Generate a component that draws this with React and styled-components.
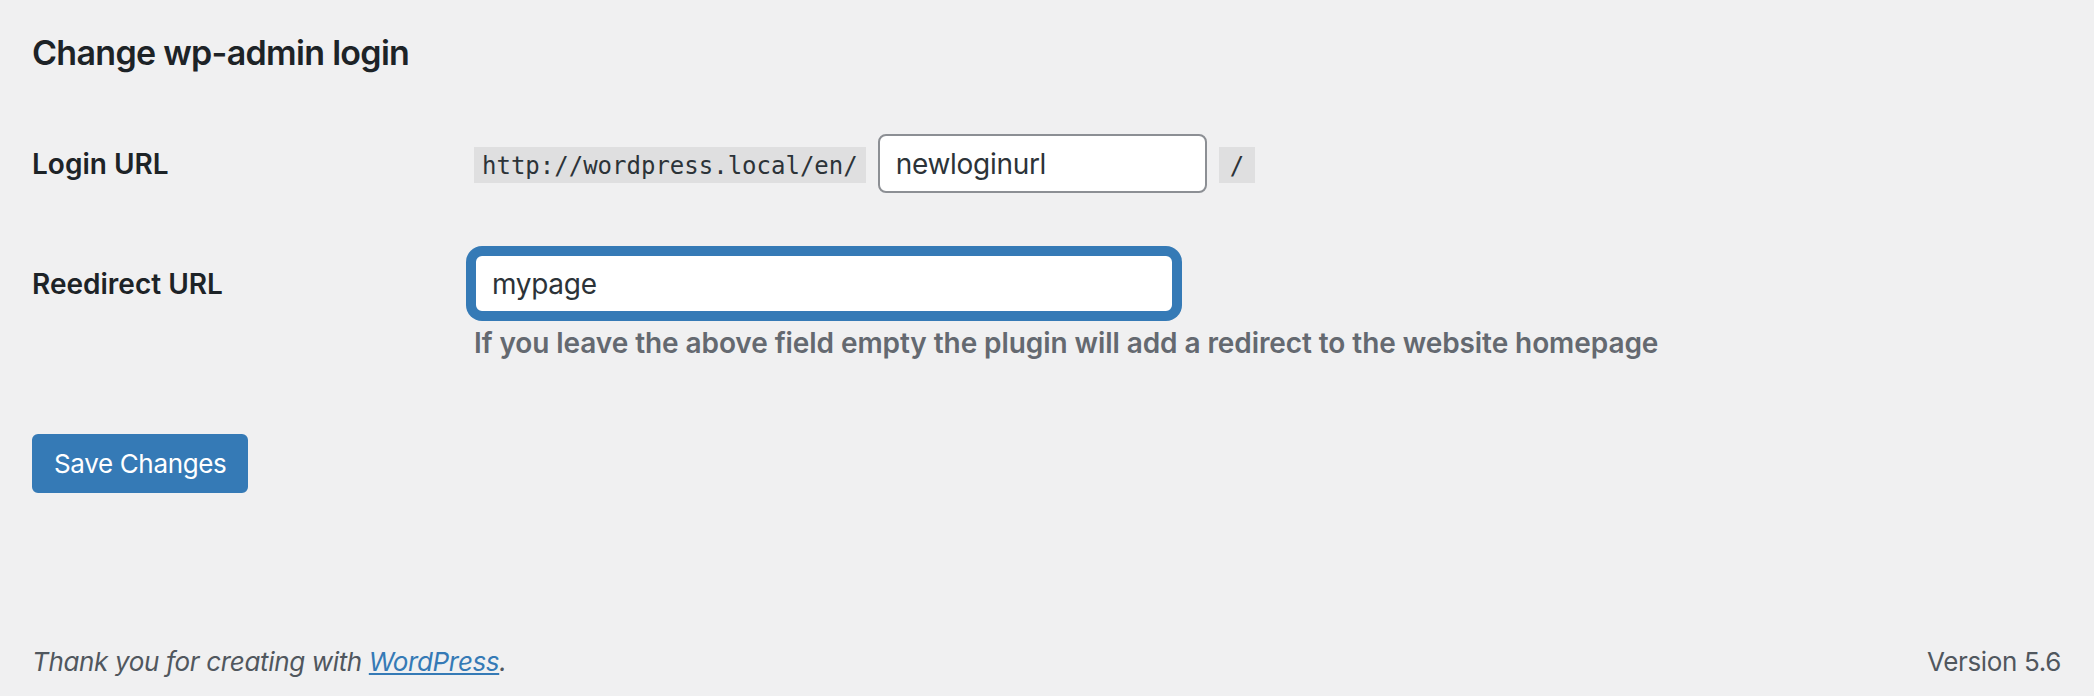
import React from "react";
import styled, { createGlobalStyle } from "styled-components";

const GlobalStyle = createGlobalStyle`
  html, body { margin: 0; padding: 0; background: #f0f0f1; }
  body { font-family: Inter, "Liberation Sans", sans-serif; color: #1d2327; }
  * { box-sizing: border-box; }
`;

const BLUE = "#357ab6";

const Page = styled.div`
  min-height: 100vh;
  display: flex;
  flex-direction: column;
  padding: 0 33px 0 32px;
`;

const Heading = styled.h2`
  margin: 31px 0 0;
  font-size: 34px;
  line-height: 44px;
  font-weight: 600;
  letter-spacing: -0.7px;
  color: #1d2327;
`;

const FormTable = styled.div`
  display: flex;
  flex-direction: column;
  margin-top: 59px;
  gap: 61px;
`;

const Row = styled.div`
  display: flex;
  align-items: baseline;
`;

const Label = styled.label`
  width: 442px;
  flex: none;
  font-size: 28px;
  font-weight: 600;
  line-height: 36px;
  color: #1d2327;
`;

const Field = styled.div`
  display: flex;
  flex-direction: column;
`;

const InlineField = styled.div`
  display: flex;
  align-items: baseline;
  gap: 12px;
`;

const Code = styled.code`
  font-family: "DejaVu Sans Mono", "Liberation Mono", monospace;
  font-size: 24px;
  line-height: 28px;
  padding: 5px ${(p) => p.$padX || 8}px 3px;
  background: rgba(0, 0, 0, 0.07);
  color: #2c3338;
`;

const TextInput = styled.input`
  font-family: Inter, "Liberation Sans", sans-serif;
  font-size: 28px;
  letter-spacing: -0.3px;
  color: #2c3338;
  background: #fff;
  height: 59px;
  width: ${(p) => p.$w}px;
  padding: 0 16px;
  border: 2px solid ${(p) => (p.$focused ? BLUE : "#8c8f94")};
  border-radius: 8px;
  box-shadow: ${(p) => (p.$focused ? `0 0 0 8px ${BLUE}` : "none")};
  outline: none;
  margin: 0;
`;

const Description = styled.p`
  margin: 9px 0 0;
  font-size: 28px;
  line-height: 42px;
  font-weight: 600;
  letter-spacing: -0.08px;
  color: #646970;
`;

const Submit = styled.button`
  margin-top: 70px;
  align-self: flex-start;
  height: 59px;
  padding: 0 20px;
  border: 2px solid ${BLUE};
  border-radius: 6px;
  background: ${BLUE};
  color: #fff;
  font-family: Inter, "Liberation Sans", sans-serif;
  font-size: 26px;
  font-weight: 400;
  letter-spacing: -0.35px;
  cursor: pointer;
`;

const Footer = styled.footer`
  margin-top: auto;
  display: flex;
  justify-content: space-between;
  align-items: baseline;
  padding-bottom: 14px;
  font-size: 26px;
  line-height: 40px;
  letter-spacing: -0.35px;
  color: #50575e;
`;

const Thanks = styled.span`
  font-style: italic;
  a {
    color: ${BLUE};
    text-decoration: underline;
  }
`;

export default function App() {
  return (
    <>
      <GlobalStyle />
      <Page>
        <Heading>Change wp-admin login</Heading>
        <FormTable>
          <Row>
            <Label htmlFor="login-url">Login URL</Label>
            <InlineField>
              <Code>http://wordpress.local/en/</Code>
              <TextInput id="login-url" $w={329} defaultValue="newloginurl" />
              <Code $padX={11}>/</Code>
            </InlineField>
          </Row>
          <Row>
            <Label htmlFor="redirect-url">Reedirect URL</Label>
            <Field>
              <TextInput id="redirect-url" $w={700} $focused defaultValue="mypage" />
              <Description>
                If you leave the above field empty the plugin will add a redirect to the website homepage
              </Description>
            </Field>
          </Row>
        </FormTable>
        <Submit type="button">Save Changes</Submit>
        <Footer>
          <Thanks>
            Thank you for creating with <a href="#wp">WordPress</a>.
          </Thanks>
          <span>Version 5.6</span>
        </Footer>
      </Page>
    </>
  );
}
